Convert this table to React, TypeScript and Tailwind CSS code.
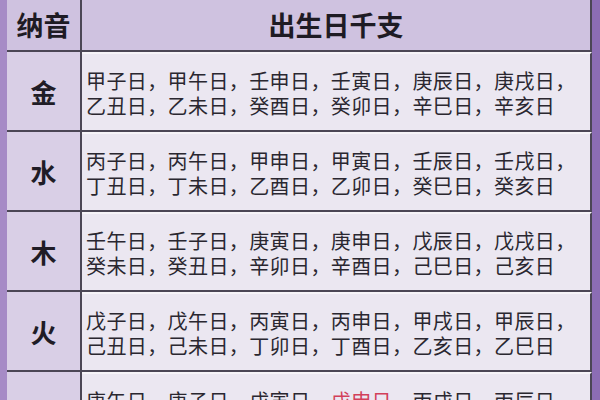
import React from 'react'

type Row = {
  label: string
  labelRed?: boolean
  lines: { text: string; red?: boolean }[][]
}

const rows: Row[] = [
  {
    label: '金',
    lines: [
      [{ text: '甲子日，甲午日，壬申日，壬寅日，庚辰日，庚戌日，' }],
      [{ text: '乙丑日，乙未日，癸酉日，癸卯日，辛巳日，辛亥日' }],
    ],
  },
  {
    label: '水',
    lines: [
      [{ text: '丙子日，丙午日，甲申日，甲寅日，壬辰日，壬戌日，' }],
      [{ text: '丁丑日，丁未日，乙酉日，乙卯日，癸巳日，癸亥日' }],
    ],
  },
  {
    label: '木',
    lines: [
      [{ text: '壬午日，壬子日，庚寅日，庚申日，戊辰日，戊戌日，' }],
      [{ text: '癸未日，癸丑日，辛卯日，辛酉日，己巳日，己亥日' }],
    ],
  },
  {
    label: '火',
    lines: [
      [{ text: '戊子日，戊午日，丙寅日，丙申日，甲戌日，甲辰日，' }],
      [{ text: '己丑日，己未日，丁卯日，丁酉日，乙亥日，乙巳日' }],
    ],
  },
  {
    label: '土',
    labelRed: true,
    lines: [
      [
        { text: '庚午日，庚子日，戊寅日，' },
        { text: '戊申日', red: true },
        { text: '，丙戌日，丙辰日，' },
      ],
      [{ text: '辛未日，辛丑日，己卯日，己酉日，丁亥日，丁巳日' }],
    ],
  },
]

const cjk = { fontFamily: '"Noto Sans CJK SC", "Noto Sans", sans-serif' }

export default function App() {
  return (
    <div className="flex h-[400px] w-[600px] overflow-hidden bg-[#e9e4ef]" style={cjk}>
      <div className="w-[7px] shrink-0 bg-[#a68bc6]" />

      <div className="flex flex-1 flex-col">
        {/* header */}
        <div className="flex h-[52px] shrink-0 border-b-2 border-[#4b4655] bg-[#cfc2e0]">
          <div className="flex w-[75px] shrink-0 items-center justify-center border-r-2 border-[#4b4655] text-[27px] font-bold text-[#1e1b24]">
            纳音
          </div>
          <div className="flex flex-1 items-center justify-center border-r-2 border-[#4b4655] text-[27px] font-bold text-[#1e1b24]">
            出生日千支
          </div>
        </div>

        {rows.map((row) => (
          <div
            key={row.label}
            className="flex h-[80px] shrink-0 border-b-2 border-[#4b4655]"
          >
            <div
              className={
                'flex w-[75px] shrink-0 items-center justify-center border-r-2 border-[#4b4655] bg-[#d9cfe6] text-[26px] font-bold ' +
                (row.labelRed ? 'text-[#d0607a]' : 'text-[#201c26]')
              }
            >
              {row.label}
            </div>
            <div className="flex flex-1 flex-col justify-center border-r-2 border-t-2 border-[#4b4655] border-t-[#f6f4f8] bg-[#ebe7f1] pl-[4px] pt-[2px] text-[20px] leading-[25px] tracking-[0.4px] text-[#2a2730]">
              {row.lines.map((line, i) => (
                <div key={i} className="whitespace-nowrap">
                  {line.map((seg, j) => (
                    <span key={j} className={seg.red ? 'text-[#d2405a]' : ''}>
                      {seg.text}
                    </span>
                  ))}
                </div>
              ))}
            </div>
          </div>
        ))}
      </div>

      <div className="w-[8px] shrink-0 bg-[#8c6db4]" />
    </div>
  )
}
